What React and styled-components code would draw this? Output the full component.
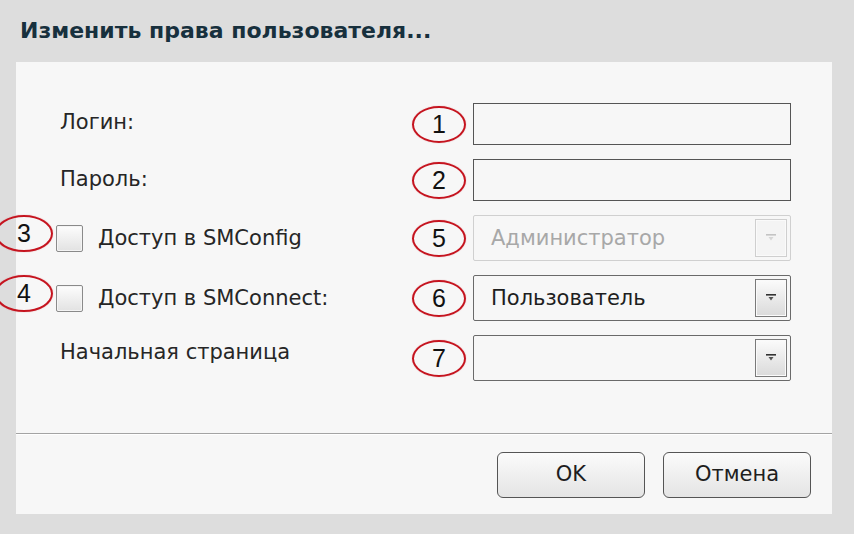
import React from "react";
import styled, { createGlobalStyle } from "styled-components";

const GlobalStyle = createGlobalStyle`
  html, body {
    margin: 0;
    padding: 0;
    background: #dedede;
  }
  body {
    font-family: "DejaVu Sans", "Liberation Sans", sans-serif;
  }
`;

const Window = styled.div`
  width: 854px;
  height: 534px;
  display: flex;
  flex-direction: column;
  background: #dddddd;
  overflow: hidden;
  box-sizing: border-box;
`;

const TitleBar = styled.div`
  height: 62px;
  flex: none;
  display: flex;
  align-items: center;
  padding-left: 20px;
  padding-bottom: 2px;
  box-sizing: border-box;
  font-size: 22px;
  font-weight: bold;
  color: #17303d;
`;

const Panel = styled.div`
  flex: 1;
  margin: 0 22px 20px 16px;
  background: #f7f7f7;
  display: flex;
  flex-direction: column;
`;

const Form = styled.div`
  flex: 1;
  display: grid;
  grid-template-columns: 1fr 60px 318px;
  grid-auto-rows: min-content;
  row-gap: 14px;
  padding: 41px 41px 0 44px;
`;

const Label = styled.div`
  align-self: center;
  font-size: 21px;
  color: #262626;
  padding-bottom: ${(p) => p.$lift || 4}px;
`;

const CheckRow = styled.label`
  position: relative;
  align-self: center;
  display: flex;
  align-items: center;
  gap: 15px;
  margin-left: -4px;
  font-size: 21px;
  color: #262626;
`;

const Box = styled.span`
  width: 27px;
  height: 27px;
  box-sizing: border-box;
  border: 1px solid #8a8a8a;
  border-radius: 2px;
  background: linear-gradient(#fdfdfd, #e2e2e2);
  box-shadow: inset 0 0 0 1px #f4f4f4;
`;

const Mark = styled.span`
  width: 54px;
  height: 37px;
  box-sizing: border-box;
  border: 2px solid #c5141f;
  border-radius: 50%;
  box-shadow: 0 0 1px rgba(200, 20, 30, 0.5);
  display: flex;
  align-items: center;
  justify-content: center;
  font-family: "Liberation Sans", Arial, sans-serif;
  font-size: 25px;
  color: #111;
  align-self: center;
  justify-self: start;
  margin-left: -1px;
`;

const SideMark = styled(Mark)`
  position: absolute;
  left: -61px;
  top: 50%;
  margin-left: 0;
  width: 58px;
  transform: translateY(-62%);
`;

const TextInput = styled.input`
  height: 42px;
  width: 100%;
  box-sizing: border-box;
  border: 1px solid #555;
  background: #f7f7f7;
  outline: none;
  font: inherit;
`;

const Select = styled.div`
  height: 46px;
  box-sizing: border-box;
  border: 1px solid ${(p) => (p.$disabled ? "#d0d0d0" : "#6a6a6a")};
  border-radius: 2px;
  background: #f7f7f7;
  display: flex;
  align-items: center;
  justify-content: space-between;
  padding: 0 3px 0 17px;
  font-size: 21px;
  color: ${(p) => (p.$disabled ? "#a8a8a8" : "#1e1e1e")};
`;

const ArrowButton = styled.span`
  width: 32px;
  height: 38px;
  box-sizing: border-box;
  border: 1px solid ${(p) => (p.$disabled ? "#cfcfcf" : "#7a7a7a")};
  background: ${(p) =>
    p.$disabled ? "#f4f4f4" : "linear-gradient(#fbfbfb, #dadada)"};
  display: flex;
  align-items: center;
  justify-content: center;
  box-shadow: inset 0 0 0 1px #fafafa;
`;

const Footer = styled.div`
  height: 78px;
  flex: none;
  border-top: 1px solid #a4a4a4;
  box-shadow: inset 0 1px 0 #ffffff;
  display: flex;
  align-items: center;
  justify-content: flex-end;
  gap: 18px;
  padding: 2px 21px 0 0;
`;

const Button = styled.button`
  width: 148px;
  height: 46px;
  border: 1px solid #555;
  border-radius: 6px;
  background: linear-gradient(#fbfbfb, #e4e4e4);
  font-family: "DejaVu Sans", sans-serif;
  font-size: 21px;
  color: #1e1e1e;
  padding: 0 0 2px;
`;

const Arrow = ({ disabled }) => (
  <svg width="12" height="10" viewBox="0 0 12 10">
    <rect x="1" y="1" width="10" height="1.6" fill={disabled ? "#c4c4c4" : "#333"} />
    <path d="M3.5 4 H8.5 L6 7.5 Z" fill={disabled ? "#d6d6d6" : "#555"} />
  </svg>
);

const Dropdown = ({ value, disabled }) => (
  <Select $disabled={disabled}>
    <span>{value}</span>
    <ArrowButton $disabled={disabled}>
      <Arrow disabled={disabled} />
    </ArrowButton>
  </Select>
);

export default function App() {
  return (
    <Window>
      <GlobalStyle />
      <TitleBar>Изменить права пользователя...</TitleBar>
      <Panel>
        <Form>
          <Label>Логин:</Label>
          <Mark>1</Mark>
          <TextInput />

          <Label $lift={2}>Пароль:</Label>
          <Mark>2</Mark>
          <TextInput type="password" />

          <CheckRow>
            <SideMark>3</SideMark>
            <Box />
            <span>Доступ в SMConfig</span>
          </CheckRow>
          <Mark>5</Mark>
          <Dropdown value="Администратор" disabled />

          <CheckRow>
            <SideMark>4</SideMark>
            <Box />
            <span>Доступ в SMConnect:</span>
          </CheckRow>
          <Mark>6</Mark>
          <Dropdown value="Пользователь" />

          <Label $lift={12}>Начальная страница</Label>
          <Mark>7</Mark>
          <Dropdown value="" />
        </Form>
        <Footer>
          <Button>OK</Button>
          <Button>Отмена</Button>
        </Footer>
      </Panel>
    </Window>
  );
}
